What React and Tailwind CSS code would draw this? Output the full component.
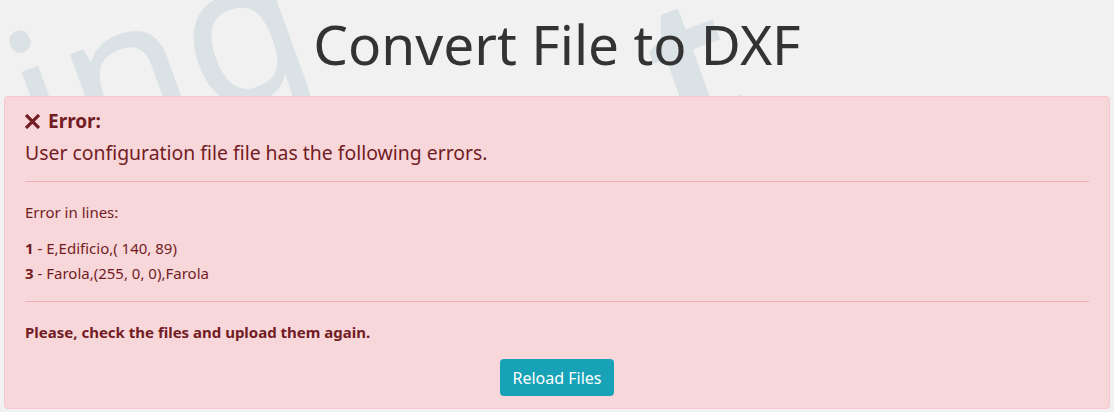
import React from 'react'

const LINES = [
  { n: '1', text: 'E,Edificio,( 140, 89)' },
  { n: '3', text: 'Farola,(255, 0, 0),Farola' },
]

const App = () => {
  return (
    <div className="relative min-h-screen w-full overflow-hidden bg-[#f1f1f1]" style={{ fontFamily: '"Noto Sans", "Open Sans", sans-serif' }}>
      {/* background watermark */}
      <div className="pointer-events-none absolute inset-0 select-none text-[#dae2e5]">
        <span className="absolute left-[50px] top-[0px] origin-bottom-left -rotate-[20deg] text-[200px] leading-none">ing</span>
        <span className="absolute left-[650px] top-[-35px] rotate-[-20deg] text-[190px] font-bold leading-none">t</span>
      </div>

      <div className="relative flex flex-col items-center">
        <h1 className="pt-[6px] pb-[14px] text-[55px] leading-[76px] text-[#333]">Convert File to DXF</h1>

        <div className="mx-[4px] w-[calc(100%-8px)] rounded-[4px] border border-[#f5c6cb] bg-[#f8d7da] px-[20px] pt-[11px] pb-[12px] text-[#721c24]">
          <div className="flex items-center gap-[8px] text-[19px] font-bold leading-[26px]">
            <svg width="15" height="15" viewBox="0 0 14 14" className="mt-[1px]">
              <path d="M2 2 L12 12 M12 2 L2 12" stroke="#721c24" strokeWidth="3" strokeLinecap="square" />
            </svg>
            <span>Error:</span>
          </div>
          <p className="mt-[4px] text-[19.4px] leading-[30px]">User configuration file file has the following errors.</p>

          <hr className="mt-[13px] border-t border-[#f1b0b7]" />

          <p className="mt-[19px] text-[15px] leading-[22px]">Error in lines:</p>
          <div className="mt-[13px] text-[15px] leading-[25px]">
            {LINES.map((l) => (
              <div key={l.n}>
                <b>{l.n}</b> - {l.text}
              </div>
            ))}
          </div>

          <hr className="mt-[15px] border-t border-[#f1b0b7]" />

          <p className="mt-[19px] text-[15px] font-bold leading-[22px]">Please, check the files and upload them again.</p>

          <div className="mt-[16px] flex justify-center">
            <button className="h-[37px] w-[114px] rounded-[4px] bg-[#17a2b8] text-[16px] text-white">Reload Files</button>
          </div>
        </div>
      </div>
    </div>
  )
}

export default App
